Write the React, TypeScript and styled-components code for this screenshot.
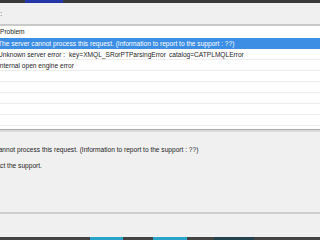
import React from 'react'
import styled, { createGlobalStyle } from 'styled-components'

const GlobalStyle = createGlobalStyle`
  html, body {
    margin: 0;
    padding: 0;
    overflow: hidden;
    background: #f0f0f0;
  }
  body {
    font-family: "Liberation Sans", Arial, sans-serif;
    font-size: 6.6px;
    color: #1e1e1e;
  }
`

const Screen = styled.div`
  width: 320px;
  height: 240px;
  display: flex;
  flex-direction: column;
  overflow: hidden;
`

const Strip = styled.div`
  height: 3px;
  flex: none;
  display: flex;
  background: #3a3a3a;
`

const StripSegment = styled.div<{ $left: number; $width: number; $color: string }>`
  margin-left: ${p => p.$left}px;
  width: ${p => p.$width}px;
  background: ${p => p.$color};
`

const Toolbar = styled.div`
  height: 21px;
  flex: none;
  background: #f0f0f0;
  border-bottom: 2px solid #c9c9c9;
  display: flex;
  align-items: center;
  font-size: 8px;
  color: #555;
`

const List = styled.div`
  height: 103px;
  flex: none;
  background: #ffffff;
  display: flex;
  flex-direction: column;
  overflow: hidden;
`

const Row = styled.div<{ $selected?: boolean; $header?: boolean }>`
  height: ${p => (p.$header ? 12 : 11)}px;
  flex: none;
  display: flex;
  align-items: center;
  white-space: nowrap;
  text-indent: ${p => (p.$header ? 0 : -2)}px;
  background: ${p => (p.$selected ? '#3c8ee4' : '#ffffff')};
  color: ${p => (p.$selected ? '#ffffff' : '#1e1e1e')};
  border-bottom: 1px solid ${p => (p.$header || p.$selected ? 'transparent' : '#ededed')};
  box-sizing: border-box;
`

const Gap = styled.span<{ $w: number }>`
  display: inline-block;
  flex: none;
  width: ${p => p.$w}px;
`

const Splitter = styled.div`
  height: 3px;
  flex: none;
  border-top: 1px solid #a8a8a8;
  background: #dcdcdc;
  box-sizing: border-box;
`

const Details = styled.div`
  height: 82px;
  flex: none;
  background: #f0f0f0;
  border-bottom: 2px solid #cdcdcd;
  box-sizing: border-box;
  padding-top: 14px;
  overflow: hidden;
`

const DetailLine = styled.div`
  white-space: nowrap;
  margin-left: -38px;
  height: 16px;
  line-height: 8px;
`

const Lower = styled.div`
  flex: 1;
  background: #f0f0f0;
`

const Taskbar = styled(Strip)`
  background: #444444;
`

export default function App() {
  return (
    <>
      <GlobalStyle />
      <Screen>
        <Strip>
          <StripSegment $left={25} $width={38} $color="#2435a8" />
        </Strip>
        <Toolbar>:</Toolbar>
        <List>
          <Row $header>Problem</Row>
          <Row $selected>The server cannot process this request. (Information to report to the support : ??)</Row>
          <Row>
            Unknown server error :<Gap $w={6} />key=XMQL_SRorPTParsingError<Gap $w={5} />catalog=CATPLMQLError
          </Row>
          <Row>Internal open engine error</Row>
          <Row />
          <Row />
          <Row />
          <Row />
          <Row />
        </List>
        <Splitter />
        <Details>
          <DetailLine>The server cannot process this request. (Information to report to the support : ??)</DetailLine>
          <DetailLine>Please contact the support.</DetailLine>
        </Details>
        <Lower />
        <Taskbar>
          <StripSegment $left={90} $width={33} $color="#2aa3c8" />
          <StripSegment $left={30} $width={34} $color="#2aa3c8" />
          <StripSegment $left={27} $width={40} $color="#24434e" />
        </Taskbar>
      </Screen>
    </>
  )
}
